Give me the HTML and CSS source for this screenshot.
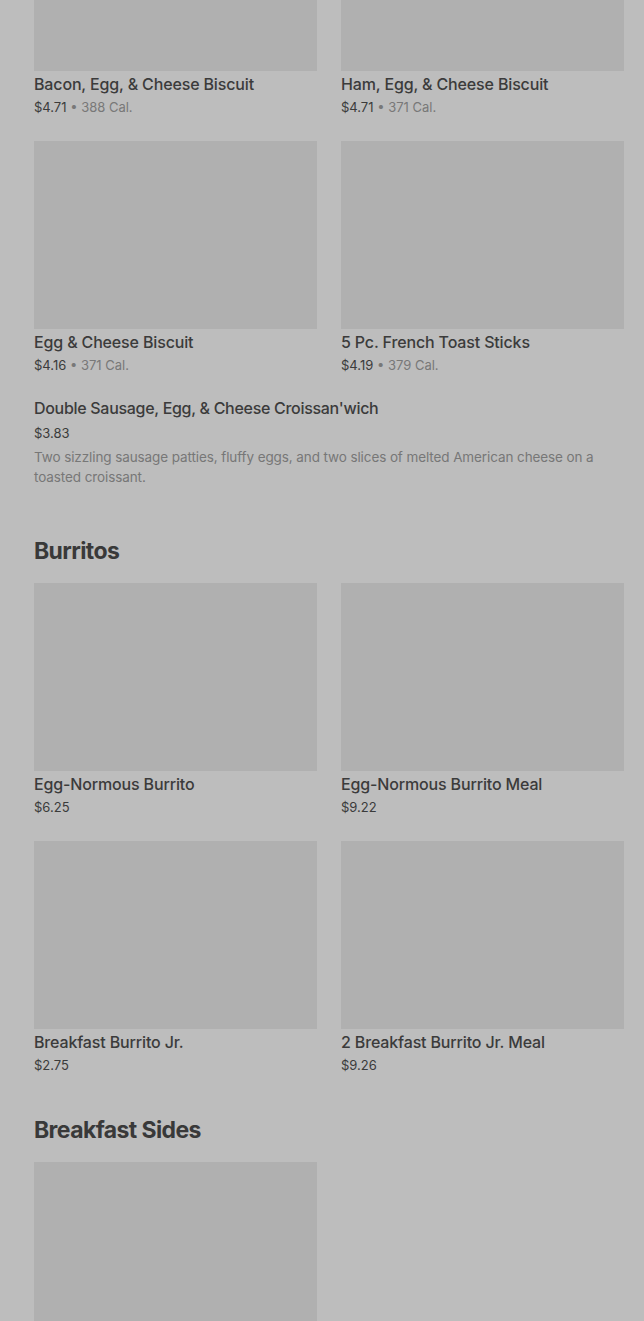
FILE: index.html
```html
<!DOCTYPE html>
<html lang="en">
<head>
    <meta charset="UTF-8">
    <meta name="viewport" content="width=device-width, initial-scale=1.0">
    <title>Menu - Breakfast</title>
    <link rel="stylesheet" href="styles.css">
</head>
<body>
    <main class="menu">
        <section class="menu-section">
            <div class="item-grid">
                <div class="item-card">
                    <div class="item-photo"></div>
                    <h3 class="item-name">Bacon, Egg, &amp; Cheese Biscuit</h3>
                    <p class="item-meta"><span class="item-price">$4.71</span> • 388 Cal.</p>
                </div>
                <div class="item-card">
                    <div class="item-photo"></div>
                    <h3 class="item-name">Ham, Egg, &amp; Cheese Biscuit</h3>
                    <p class="item-meta"><span class="item-price">$4.71</span> • 371 Cal.</p>
                </div>
                <div class="item-card">
                    <div class="item-photo"></div>
                    <h3 class="item-name">Egg &amp; Cheese Biscuit</h3>
                    <p class="item-meta"><span class="item-price">$4.16</span> • 371 Cal.</p>
                </div>
                <div class="item-card">
                    <div class="item-photo"></div>
                    <h3 class="item-name">5 Pc. French Toast Sticks</h3>
                    <p class="item-meta"><span class="item-price">$4.19</span> • 379 Cal.</p>
                </div>
            </div>

            <div class="item-row">
                <h3 class="item-name">Double Sausage, Egg, &amp; Cheese Croissan'wich</h3>
                <p class="item-meta"><span class="item-price">$3.83</span></p>
                <p class="item-desc">Two sizzling sausage patties, fluffy eggs, and two slices of melted American cheese on a toasted croissant.</p>
            </div>
        </section>

        <section class="menu-section">
            <h2 class="section-title">Burritos</h2>
            <div class="item-grid">
                <div class="item-card">
                    <div class="item-photo"></div>
                    <h3 class="item-name">Egg-Normous Burrito</h3>
                    <p class="item-meta"><span class="item-price">$6.25</span></p>
                </div>
                <div class="item-card">
                    <div class="item-photo"></div>
                    <h3 class="item-name">Egg-Normous Burrito Meal</h3>
                    <p class="item-meta"><span class="item-price">$9.22</span></p>
                </div>
                <div class="item-card">
                    <div class="item-photo"></div>
                    <h3 class="item-name">Breakfast Burrito Jr.</h3>
                    <p class="item-meta"><span class="item-price">$2.75</span></p>
                </div>
                <div class="item-card">
                    <div class="item-photo"></div>
                    <h3 class="item-name">2 Breakfast Burrito Jr. Meal</h3>
                    <p class="item-meta"><span class="item-price">$9.26</span></p>
                </div>
            </div>
        </section>

        <section class="menu-section">
            <h2 class="section-title">Breakfast Sides</h2>
            <div class="item-grid">
                <div class="item-card">
                    <div class="item-photo"></div>
                </div>
            </div>
        </section>
    </main>
</body>
</html>
```

FILE: styles.css
```css
* {
    margin: 0;
    padding: 0;
    box-sizing: border-box;
}

html, body {
    height: 100%;
    overflow: hidden;
}

body {
    font-family: Inter, 'Noto Sans', Arial, sans-serif;
    background: #bdbdbd;
    color: #3b3b3b;
}

/* page is scrolled part way down the menu */
.menu {
    margin-top: -117px;
    padding: 0 20px 0 34px;
}

.menu-section + .menu-section {
    margin-top: 38px;
}

.section-title {
    font-size: 23px;
    font-weight: 700;
    line-height: 32px;
    letter-spacing: -0.6px;
    color: #393939;
    margin-bottom: 16px;
}

.item-grid {
    display: grid;
    grid-template-columns: 283px 283px;
    column-gap: 24px;
    row-gap: 23px;
}

.item-photo {
    height: 188px;
    background: #b0b0b0;
}

.item-card .item-name {
    padding-top: 1px;
}

.item-name {
    font-size: 16px;
    font-weight: 500;
    line-height: 24px;
    letter-spacing: -0.15px;
    color: #3b3b3b;
}

.item-meta {
    font-size: 13px;
    line-height: 22px;
    color: #787878;
}

.item-price {
    color: #3b3b3b;
}

.item-row {
    padding: 22px 0 10px;
}

.item-row .item-name {
    line-height: 20px;
    letter-spacing: -0.3px;
}

.item-row .item-meta {
    margin-top: 4px;
}

.item-desc {
    margin-top: 3px;
    font-size: 13.5px;
    line-height: 20px;
    letter-spacing: -0.1px;
    color: #777777;
    max-width: 580px;
}
```
